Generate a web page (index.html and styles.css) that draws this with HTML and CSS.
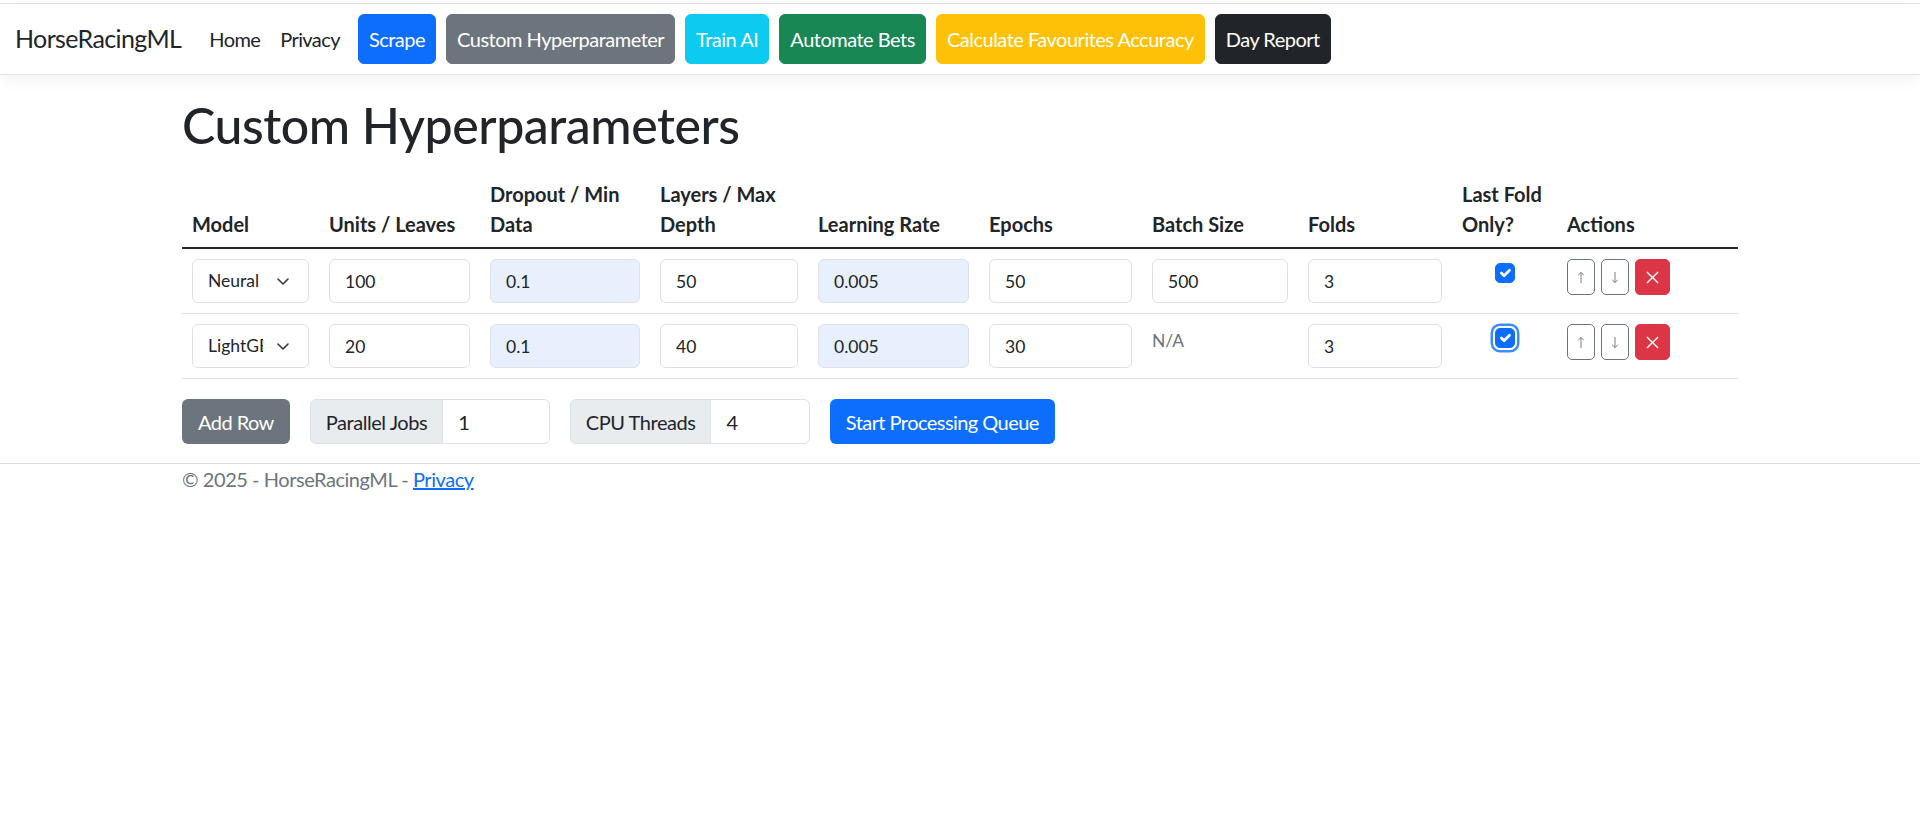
FILE: index.html
```html
<!DOCTYPE html>
<html lang="en">
<head>
    <meta charset="UTF-8">
    <meta name="viewport" content="width=device-width, initial-scale=1.0">
    <title>Custom Hyperparameters - HorseRacingML</title>
    <link rel="stylesheet" href="styles.css">
</head>
<body>
    <header>
        <nav class="navbar">
            <a class="navbar-brand" href="#">HorseRacingML</a>
            <ul class="navbar-nav">
                <li><a class="nav-link" href="#">Home</a></li>
                <li><a class="nav-link" href="#">Privacy</a></li>
                <li><a class="nav-btn btn-primary" href="#">Scrape</a></li>
                <li><a class="nav-btn btn-secondary" href="#">Custom Hyperparameter</a></li>
                <li><a class="nav-btn btn-info" href="#">Train AI</a></li>
                <li><a class="nav-btn btn-success" href="#">Automate Bets</a></li>
                <li><a class="nav-btn btn-warning" href="#">Calculate Favourites Accuracy</a></li>
                <li><a class="nav-btn btn-dark" href="#">Day Report</a></li>
            </ul>
        </nav>
    </header>

    <main class="container">
        <h1>Custom Hyperparameters</h1>

        <table class="table">
            <colgroup>
                <col class="col-model">
                <col class="col-units">
                <col class="col-dropout">
                <col class="col-layers">
                <col class="col-lr">
                <col class="col-epochs">
                <col class="col-batch">
                <col class="col-folds">
                <col class="col-last">
                <col class="col-actions">
            </colgroup>
            <thead>
                <tr>
                    <th>Model</th>
                    <th>Units / Leaves</th>
                    <th>Dropout / Min Data</th>
                    <th>Layers / Max Depth</th>
                    <th>Learning Rate</th>
                    <th>Epochs</th>
                    <th>Batch Size</th>
                    <th>Folds</th>
                    <th>Last Fold Only?</th>
                    <th>Actions</th>
                </tr>
            </thead>
            <tbody>
                <tr>
                    <td>
                        <div class="select-wrap">
                            <select class="form-select">
                                <option selected>Neural Network</option>
                                <option>LightGBM</option>
                            </select>
                            <svg class="chevron" viewBox="0 0 12 7"><path d="M1 1l5 5 5-5"/></svg>
                        </div>
                    </td>
                    <td><input class="form-control" type="text" value="100"></td>
                    <td><input class="form-control autofilled" type="text" value="0.1"></td>
                    <td><input class="form-control" type="text" value="50"></td>
                    <td><input class="form-control autofilled" type="text" value="0.005"></td>
                    <td><input class="form-control" type="text" value="50"></td>
                    <td><input class="form-control" type="text" value="500"></td>
                    <td><input class="form-control" type="text" value="3"></td>
                    <td class="cell-center">
                        <span class="check-box"><svg viewBox="0 0 20 20"><path d="m6 10 3 3 6-6"/></svg></span>
                    </td>
                    <td>
                        <div class="row-actions">
                            <button class="btn-icon btn-outline"><svg viewBox="0 0 8 14"><path d="M4 13V1.5M1 4.5l3-3 3 3"/></svg></button>
                            <button class="btn-icon btn-outline"><svg viewBox="0 0 8 14"><path d="M4 1v11.5M1 9.5l3 3 3-3"/></svg></button>
                            <button class="btn-icon btn-danger"><svg viewBox="0 0 14 14"><path d="M1 1l12 12M13 1L1 13"/></svg></button>
                        </div>
                    </td>
                </tr>
                <tr>
                    <td>
                        <div class="select-wrap">
                            <select class="form-select">
                                <option>Neural Network</option>
                                <option selected>LightGBM</option>
                            </select>
                            <svg class="chevron" viewBox="0 0 12 7"><path d="M1 1l5 5 5-5"/></svg>
                        </div>
                    </td>
                    <td><input class="form-control" type="text" value="20"></td>
                    <td><input class="form-control autofilled" type="text" value="0.1"></td>
                    <td><input class="form-control" type="text" value="40"></td>
                    <td><input class="form-control autofilled" type="text" value="0.005"></td>
                    <td><input class="form-control" type="text" value="30"></td>
                    <td><span class="text-muted small">N/A</span></td>
                    <td><input class="form-control" type="text" value="3"></td>
                    <td class="cell-center">
                        <span class="check-box focused"><svg viewBox="0 0 20 20"><path d="m6 10 3 3 6-6"/></svg></span>
                    </td>
                    <td>
                        <div class="row-actions">
                            <button class="btn-icon btn-outline"><svg viewBox="0 0 8 14"><path d="M4 13V1.5M1 4.5l3-3 3 3"/></svg></button>
                            <button class="btn-icon btn-outline"><svg viewBox="0 0 8 14"><path d="M4 1v11.5M1 9.5l3 3 3-3"/></svg></button>
                            <button class="btn-icon btn-danger"><svg viewBox="0 0 14 14"><path d="M1 1l12 12M13 1L1 13"/></svg></button>
                        </div>
                    </td>
                </tr>
            </tbody>
        </table>

        <div class="controls">
            <button class="btn btn-secondary">Add Row</button>
            <div class="input-group">
                <span class="input-group-text">Parallel Jobs</span>
                <input class="group-input" type="text" value="1">
            </div>
            <div class="input-group">
                <span class="input-group-text">CPU Threads</span>
                <input class="group-input" type="text" value="4">
            </div>
            <button class="btn btn-primary">Start Processing Queue</button>
        </div>
    </main>

    <footer class="footer">
        <div class="container">&copy; 2025 - HorseRacingML - <a href="#">Privacy</a></div>
    </footer>
</body>
</html>
```

FILE: styles.css
```css
* {
    box-sizing: border-box;
}

body {
    margin: 0;
    font-family: Lato, 'Liberation Sans', sans-serif;
    font-size: 20px;
    line-height: 30px;
    letter-spacing: -0.45px;
    color: #212529;
    background: #fff;
}

a {
    text-decoration: none;
}

/* Navbar */
.navbar {
    display: flex;
    align-items: center;
    margin-top: 3px;
    padding: 10px 15px;
    border-top: 1px solid #e3e3e3;
    border-bottom: 1px solid #dee2e6;
    box-shadow: 0 5px 15px rgba(0,0,0,0.05);
}

.navbar-brand {
    font-size: 25px;
    line-height: 37.5px;
    letter-spacing: -0.6px;
    padding: 6.25px 0;
    margin-right: 18px;
    color: #212529;
}

.navbar-nav {
    display: flex;
    align-items: center;
    list-style: none;
    margin: 0;
    padding: 0;
}

.nav-link {
    display: block;
    padding: 10px;
    letter-spacing: -0.6px;
    color: #212529;
}

.nav-btn {
    display: block;
    margin-left: 10px;
    padding: 9px 10px;
    letter-spacing: -0.5px;
    border: 1px solid transparent;
    border-radius: 6px;
    color: #fff;
}

li:nth-child(3) .nav-btn {
    margin-left: 8px;
}

.btn-primary { background: #0d6efd; border-color: #0d6efd; }
.btn-secondary { background: #6c757d; border-color: #6c757d; }
.btn-info { background: #0dcaf0; border-color: #0dcaf0; }
.btn-success { background: #198754; border-color: #198754; }
.btn-warning { background: #ffc107; border-color: #ffc107; }
.btn-dark { background: #212529; border-color: #212529; }
.btn-danger { background: #dc3545; border-color: #dc3545; }

/* Page */
.container {
    width: 1556px;
    margin: 0 auto;
}

main {
    padding-top: 20px;
}

h1 {
    margin: 0 0 14px;
    font-size: 50px;
    line-height: 60px;
    font-weight: 500;
    letter-spacing: -0.45px;
}

/* Table */
.table {
    width: 100%;
    table-layout: fixed;
    border-collapse: collapse;
    margin-bottom: 20px;
}

.col-model { width: 137px; }
.col-units { width: 161px; }
.col-dropout { width: 170px; }
.col-layers { width: 158px; }
.col-lr { width: 171px; }
.col-epochs { width: 163px; }
.col-batch { width: 156px; }
.col-folds { width: 154px; }
.col-last { width: 105px; }
.col-actions { width: 181px; }

.table th {
    padding: 10px 10px 8px;
    text-align: left;
    vertical-align: bottom;
    font-weight: 700;
    letter-spacing: 0;
    border-bottom: 2px solid #212529;
}

.table td {
    padding: 10px;
    vertical-align: top;
    border-bottom: 1px solid #dee2e6;
}

.cell-center {
    text-align: center;
}

.form-control,
.form-select {
    display: block;
    width: 100%;
    height: 44px;
    margin: 0;
    padding: 8px 15px;
    font-family: inherit;
    font-size: 17.5px;
    line-height: 26px;
    letter-spacing: 0;
    color: #212529;
    background: #fff;
    border: 1px solid #dee2e6;
    border-radius: 6px;
    outline: none;
}

.form-control.autofilled {
    background: #e8f0fe;
}

.select-wrap {
    position: relative;
}

.form-select {
    appearance: none;
    padding-right: 45px;
}

.chevron {
    position: absolute;
    right: 20px;
    top: 19px;
    width: 12px;
    height: 7px;
    fill: none;
    stroke: #343a40;
    stroke-width: 1.6;
    stroke-linecap: round;
    stroke-linejoin: round;
    pointer-events: none;
}

.text-muted {
    color: #6c757d;
}

.small {
    font-size: 17.5px;
    letter-spacing: 0;
}

.check-box {
    display: inline-block;
    width: 20px;
    height: 20px;
    margin-top: 4px;
    vertical-align: top;
    background: #0d6efd;
    border: 1px solid #0d6efd;
    border-radius: 5px;
}

.check-box svg {
    display: block;
    width: 18px;
    height: 18px;
    fill: none;
    stroke: #fff;
    stroke-width: 3;
    stroke-linecap: round;
    stroke-linejoin: round;
}

.check-box.focused {
    box-shadow: 0 0 0 2px #fff, 0 0 0 4.5px #3d8efc;
}

.row-actions {
    display: flex;
    gap: 6px;
}

.btn-icon {
    display: flex;
    align-items: center;
    justify-content: center;
    width: 28px;
    height: 36px;
    padding: 0;
    border: 1px solid #6c757d;
    border-radius: 5px;
    background: #fff;
    cursor: pointer;
}

.btn-icon svg {
    width: 8px;
    height: 13px;
    fill: none;
    stroke: #6c757d;
    stroke-width: 1;
}

.btn-icon.btn-danger {
    width: 35px;
    background: #dc3545;
    border-color: #dc3545;
}

.btn-icon.btn-danger svg {
    width: 13px;
    height: 13px;
    stroke: #fff;
    stroke-width: 1.5;
}

/* Bottom controls */
.controls {
    display: flex;
    align-items: center;
    gap: 20px;
    margin-bottom: 19px;
}

.btn {
    height: 45px;
    padding: 6.5px 15px;
    font-family: inherit;
    font-size: 20px;
    line-height: 30px;
    letter-spacing: -0.55px;
    color: #fff;
    border: 1px solid transparent;
    border-radius: 6px;
    cursor: pointer;
}

.input-group {
    display: flex;
    width: 240px;
    height: 45px;
}

.input-group-text {
    display: flex;
    align-items: center;
    padding: 0 15px;
    background: #e9ecef;
    border: 1px solid #dee2e6;
    border-radius: 6px 0 0 6px;
    white-space: nowrap;
}

.group-input {
    flex: 1;
    min-width: 0;
    margin-left: -1px;
    padding: 0 15px;
    font-family: inherit;
    font-size: 20px;
    color: #212529;
    border: 1px solid #dee2e6;
    border-radius: 0 6px 6px 0;
    outline: none;
}

/* Footer */
.footer {
    border-top: 1px solid #dee2e6;
    color: #6c757d;
}

.footer a {
    color: #0d6efd;
    text-decoration: underline;
}
```
